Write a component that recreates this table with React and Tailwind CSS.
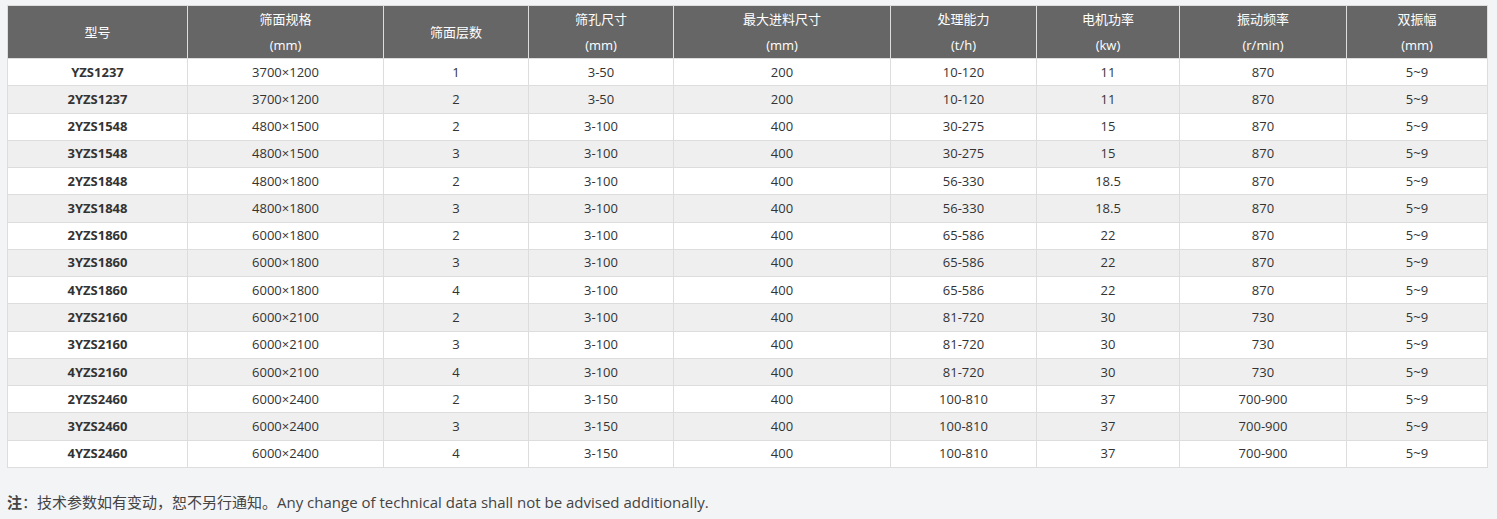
import React from "react";

const columns = [
  { title: "型号", unit: null, width: "w-[180px]" },
  { title: "筛面规格", unit: "(mm)", width: "w-[196px]" },
  { title: "筛面层数", unit: null, width: "w-[145px]" },
  { title: "筛孔尺寸", unit: "(mm)", width: "w-[145px]" },
  { title: "最大进料尺寸", unit: "(mm)", width: "w-[217px]" },
  { title: "处理能力", unit: "(t/h)", width: "w-[146px]" },
  { title: "电机功率", unit: "(kw)", width: "w-[143px]" },
  { title: "振动频率", unit: "(r/min)", width: "w-[167px]" },
  { title: "双振幅", unit: "(mm)", width: "w-[141px]" },
];

const rows = [
  ["YZS1237", "3700×1200", "1", "3-50", "200", "10-120", "11", "870", "5~9"],
  ["2YZS1237", "3700×1200", "2", "3-50", "200", "10-120", "11", "870", "5~9"],
  ["2YZS1548", "4800×1500", "2", "3-100", "400", "30-275", "15", "870", "5~9"],
  ["3YZS1548", "4800×1500", "3", "3-100", "400", "30-275", "15", "870", "5~9"],
  ["2YZS1848", "4800×1800", "2", "3-100", "400", "56-330", "18.5", "870", "5~9"],
  ["3YZS1848", "4800×1800", "3", "3-100", "400", "56-330", "18.5", "870", "5~9"],
  ["2YZS1860", "6000×1800", "2", "3-100", "400", "65-586", "22", "870", "5~9"],
  ["3YZS1860", "6000×1800", "3", "3-100", "400", "65-586", "22", "870", "5~9"],
  ["4YZS1860", "6000×1800", "4", "3-100", "400", "65-586", "22", "870", "5~9"],
  ["2YZS2160", "6000×2100", "2", "3-100", "400", "81-720", "30", "730", "5~9"],
  ["3YZS2160", "6000×2100", "3", "3-100", "400", "81-720", "30", "730", "5~9"],
  ["4YZS2160", "6000×2100", "4", "3-100", "400", "81-720", "30", "730", "5~9"],
  ["2YZS2460", "6000×2400", "2", "3-150", "400", "100-810", "37", "700-900", "5~9"],
  ["3YZS2460", "6000×2400", "3", "3-150", "400", "100-810", "37", "700-900", "5~9"],
  ["4YZS2460", "6000×2400", "4", "3-150", "400", "100-810", "37", "700-900", "5~9"],
];

export default function App() {
  return (
    <div
      className="min-h-[519px] bg-[#f3f4f6] px-[7px] pt-[5px] text-[#333]"
      style={{ fontFamily: '"Open Sans", "Noto Sans CJK SC", sans-serif' }}
    >
      <table className="w-[1481px] table-fixed border-collapse text-center text-[13px]">
        <thead>
          <tr className="h-[53px] bg-[#666] text-white">
            {columns.map((col) => (
              <th
                key={col.title}
                className={`${col.width} border border-[#ddd] px-1 font-normal leading-[26px]`}
              >
                <div>{col.title}</div>
                {col.unit && <div>{col.unit}</div>}
              </th>
            ))}
          </tr>
        </thead>
        <tbody>
          {rows.map((row, i) => (
            <tr
              key={row[0]}
              className={`h-[27.27px] ${i % 2 === 1 ? "bg-[#efefef]" : "bg-white"}`}
            >
              {row.map((cell, j) => (
                <td
                  key={j}
                  className={`border border-[#ddd] p-0 leading-none ${
                    j === 0 ? "font-bold" : ""
                  }`}
                >
                  {cell}
                </td>
              ))}
            </tr>
          ))}
        </tbody>
      </table>

      <p className="mt-[23px] text-[15px] text-[#444]">
        <span className="font-bold">注</span>：技术参数如有变动，恕不另行通知。Any
        change of technical data shall not be advised additionally.
      </p>
    </div>
  );
}
